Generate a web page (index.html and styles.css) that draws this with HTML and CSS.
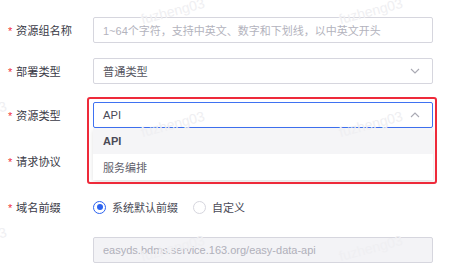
FILE: index.html
```html
<!DOCTYPE html>
<html lang="zh-CN">

<head>
    <meta charset="UTF-8">
    <meta name="viewport" content="width=device-width, initial-scale=1.0">
    <title>资源组</title>
    <link rel="stylesheet" href="styles.css">
</head>

<body>
    <div class="form">
        <div class="row row-name">
            <div class="label"><span class="req">*</span>资源组名称</div>
            <div class="field">
                <div class="input placeholder">1~64个字符，支持中英文、数字和下划线，以中英文开头</div>
            </div>
        </div>

        <div class="row row-deploy">
            <div class="label"><span class="req">*</span>部署类型</div>
            <div class="field">
                <div class="input select">
                    <span>普通类型</span>
                    <svg class="arrow" width="10" height="6" viewBox="0 0 10 6"><path d="M1 1l4 4 4-4" fill="none" stroke="#a9a9b3" stroke-width="1.1"/></svg>
                </div>
            </div>
        </div>

        <div class="row row-type">
            <div class="label"><span class="req">*</span>资源类型</div>
            <div class="field">
                <div class="input select open">
                    <span>API</span>
                    <svg class="arrow" width="10" height="6" viewBox="0 0 10 6"><path d="M1 5l4-4 4 4" fill="none" stroke="#a9a9b3" stroke-width="1.1"/></svg>
                </div>
                <!-- dropdown -->
                <div class="dropdown">
                    <div class="option active">API</div>
                    <div class="option">服务编排</div>
                </div>
                <div class="highlight"></div>
            </div>
        </div>

        <div class="row row-protocol">
            <div class="label"><span class="req">*</span>请求协议</div>
            <div class="field"></div>
        </div>

        <div class="row row-prefix">
            <div class="label"><span class="req">*</span>域名前缀</div>
            <div class="field radios">
                <label class="radio checked"><span class="dot"></span>系统默认前缀</label>
                <label class="radio"><span class="dot"></span>自定义</label>
            </div>
        </div>

        <div class="row row-domain">
            <div class="label"></div>
            <div class="field">
                <div class="input disabled">easyds.bdms.service.163.org/easy-data-api</div>
            </div>
        </div>
    </div>

    <!-- watermark -->
    <div class="wm" style="left: 140px; top: 3px;">fuzheng03</div>
    <div class="wm" style="left: 338px; top: 3px;">fuzheng03</div>
    <div class="wm" style="left: -58px; top: 106px;">fuzheng03</div>
    <div class="wm" style="left: 140px; top: 116px;">fuzheng03</div>
    <div class="wm" style="left: 338px; top: 116px;">fuzheng03</div>
    <div class="wm" style="left: -58px; top: 232px;">fuzheng03</div>
    <div class="wm" style="left: 140px; top: 240px;">fuzheng03</div>
    <div class="wm" style="left: 338px; top: 240px;">fuzheng03</div>
</body>

</html>
```

FILE: styles.css
```css
body {
    margin: 0;
    background: #ffffff;
    font-family: "Liberation Sans", "Noto Sans CJK SC", sans-serif;
    font-size: 11px;
    color: #3c3c48;
    width: 452px;
    height: 269px;
    overflow: hidden;
    position: relative;
}

.form {
    padding-top: 17px;
}

.row {
    display: flex;
    align-items: center;
    height: 26px;
}

.row-deploy { margin-top: 15px; }
.row-type { margin-top: 18px; }
.row-protocol { margin-top: 20px; }
.row-prefix { margin-top: 20px; }
.row-domain { margin-top: 17px; }

.label {
    width: 85px;
    padding-left: 8px;
    font-size: 11.2px;
    color: #3a3a46;
    display: flex;
    align-items: center;
}

.req {
    color: #f0323c;
    width: 8px;
    font-size: 11px;
    padding-top: 2px;
}

.field {
    width: 340px;
    position: relative;
}

.input {
    height: 26px;
    box-sizing: border-box;
    border: 1px solid #d6d6de;
    border-radius: 2px;
    padding: 0 9px;
    display: flex;
    align-items: center;
    color: #555560;
    font-size: 11.2px;
}

.placeholder {
    color: #b3b3bd;
    font-size: 11px;
}

.select {
    justify-content: space-between;
}

.select .arrow {
    margin-right: 3px;
}

.select.open {
    border-color: #3f72f2;
    color: #4a4a56;
}

.disabled {
    background: #f3f3f6;
    color: #b0b0ba;
    font-size: 11px;
}

/* Dropdown */
.dropdown {
    position: absolute;
    left: 0;
    top: 26px;
    width: 340px;
    background: #ffffff;
    box-shadow: 0 2px 5px rgba(0, 0, 0, 0.12);
    z-index: 2;
}

.option {
    height: 26px;
    padding: 0 10px;
    display: flex;
    align-items: center;
    color: #60606c;
    font-size: 11px;
}

.option.active {
    background: #f5f5f7;
    color: #4a4a56;
    font-weight: bold;
}

.highlight {
    position: absolute;
    left: -6px;
    top: -5px;
    width: 350px;
    height: 87px;
    box-sizing: border-box;
    border: 2px solid #ee2a3a;
    border-radius: 3px;
    z-index: 3;
}

/* Radios */
.radios {
    display: flex;
    align-items: center;
}

.radio {
    display: flex;
    align-items: center;
    font-size: 11px;
    color: #4a4a56;
    margin-right: 15px;
}

.dot {
    width: 13px;
    height: 13px;
    box-sizing: border-box;
    border: 1px solid #d6d6de;
    border-radius: 50%;
    margin-right: 6px;
    position: relative;
}

.radio.checked .dot {
    border-color: #2c63f0;
}

.radio.checked .dot::after {
    content: "";
    position: absolute;
    left: 2.5px;
    top: 2.5px;
    width: 6px;
    height: 6px;
    border-radius: 50%;
    background: #2c63f0;
}

/* Watermark */
.wm {
    position: absolute;
    font-family: "Liberation Sans", sans-serif;
    font-size: 14px;
    color: #efeff2;
    transform: rotate(-15deg);
    z-index: 5;
    pointer-events: none;
}
```
